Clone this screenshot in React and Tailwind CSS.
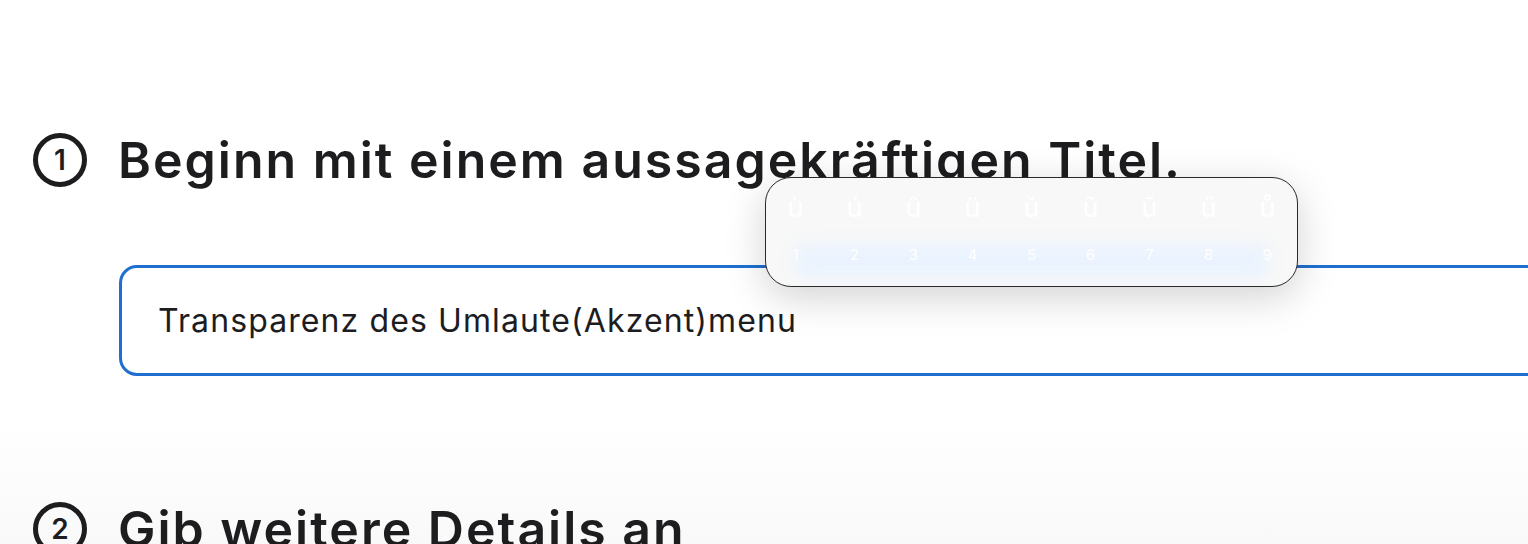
const accents = ["ù", "ú", "û", "ü", "ǔ", "ũ", "ū", "ű", "ů"];

function StepIcon({ n }) {
  return (
    <div className="flex h-[54px] w-[54px] shrink-0 items-center justify-center rounded-full border-[5px] border-[#1d1d1f]">
      <span className="text-[28px] font-semibold leading-none text-[#1d1d1f]">{n}</span>
    </div>
  );
}

function AccentMenu() {
  return (
    <div className="absolute left-[765px] top-[177px] h-[110px] w-[533px] overflow-hidden rounded-[26px] border border-[#2a2a2a] bg-[#f8f8f8] shadow-[0_10px_40px_rgba(0,0,0,0.18)]">
      <div className="absolute inset-x-[30px] bottom-[10px] h-[30px] bg-[#e8f2ff] blur-[10px]" />
      <div className="relative grid grid-cols-9 pt-[12px]">
        {accents.map((a, i) => (
          <div key={a} className="flex flex-col items-center">
            <span className="text-[27px] leading-[36px] text-white">{a}</span>
            <span className="mt-[20px] text-[15px] leading-[18px] text-white">{i + 1}</span>
          </div>
        ))}
      </div>
    </div>
  );
}

export default function App() {
  return (
    <div className="relative h-[544px] w-[1528px] overflow-hidden bg-white font-['Inter','Liberation_Sans',sans-serif] text-[#1d1d1f]">
      <div className="absolute inset-x-0 top-[420px] h-[124px] bg-gradient-to-b from-white to-[#f9f9f9]" />
      <div className="relative pt-[133px]">
        <div className="flex items-center gap-[31px] pl-[33px]">
          <StepIcon n="1" />
          <h1 className="text-[50px] font-semibold leading-[52px] tracking-[2px]">
            Beginn mit einem aussagekräftigen Titel.
          </h1>
        </div>
        <div className="ml-[119px] mt-[78px] flex h-[111px] w-[1500px] items-center rounded-[18px] border-[3px] border-[#1f6fd0] bg-white pl-[36px]">
          <span className="text-[32px] leading-none tracking-[1.1px] text-[#1d1d1f]">Transparenz des Umlaute(Akzent)menu</span>
        </div>
        <div className="mt-[126px] flex items-center gap-[31px] pl-[33px]">
          <StepIcon n="2" />
          <h2 className="text-[50px] font-semibold leading-[52px] tracking-[2px]">Gib weitere Details an</h2>
        </div>
      </div>
      <AccentMenu />
    </div>
  );
}
